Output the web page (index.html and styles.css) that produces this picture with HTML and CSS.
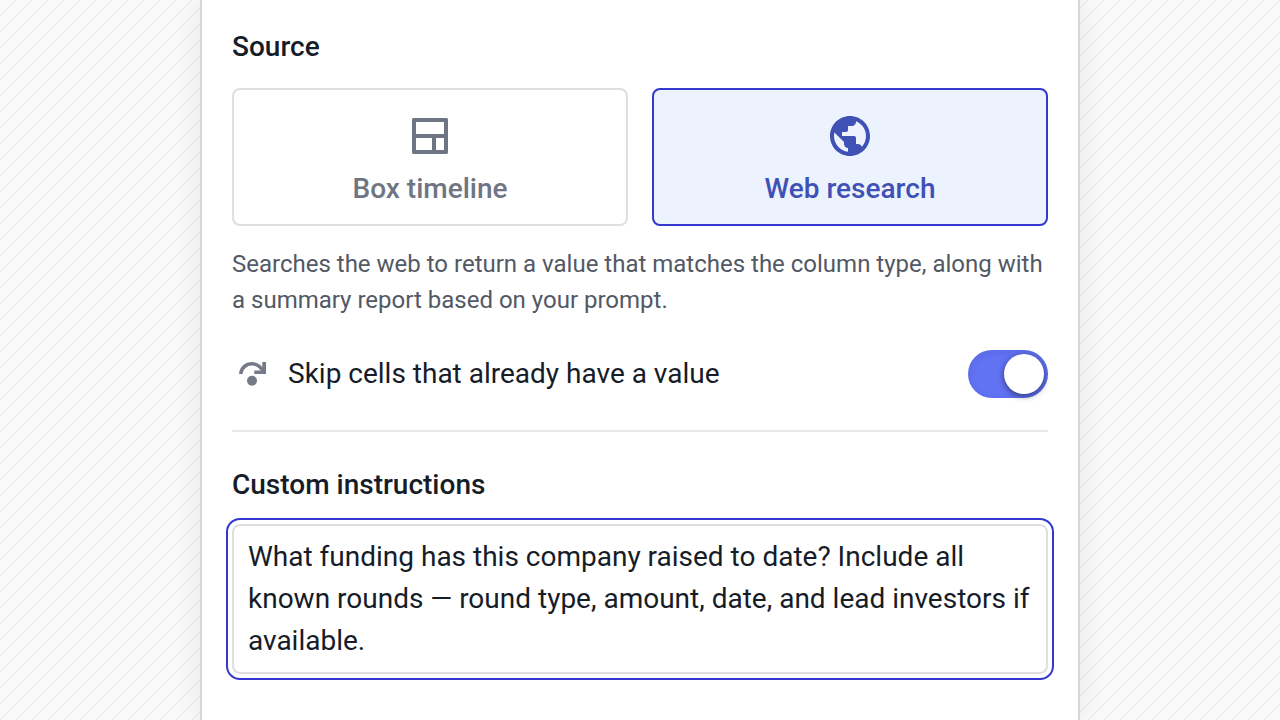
FILE: index.html
```html
<!DOCTYPE html>
<html lang="en">
  <head>
    <meta charset="UTF-8" />
    <meta name="viewport" content="width=device-width, initial-scale=1.0" />
    <title>Column settings</title>
    <link rel="stylesheet" href="styles.css">
  </head>
  <body>
    <form class="panel">
      <!-- Source -->
      <fieldset class="source">
        <legend class="section-title">Source</legend>
        <div class="source-options">
          <label class="source-card">
            <input type="radio" name="source" value="box" />
            <svg class="source-icon" viewBox="0 0 24 24" aria-hidden="true">
              <path fill-rule="evenodd" d="M3.5 3h17l.5.5v17l-.5.5h-17l-.5-.5v-17zM5 5v6h14V5zM5 13v6h8v-6zM15 13v6h4v-6z" />
            </svg>
            <span>Box timeline</span>
          </label>
          <label class="source-card">
            <input type="radio" name="source" value="web" checked />
            <svg class="source-icon" viewBox="0 0 24 24" aria-hidden="true">
              <path d="M12 2C6.48 2 2 6.48 2 12s4.48 10 10 10 10-4.48 10-10S17.52 2 12 2zm-1 17.93c-3.95-.49-7-3.85-7-7.93 0-.62.08-1.21.21-1.79L9 15v1c0 1.1.9 2 2 2v1.93zm6.9-2.54c-.26-.81-1-1.39-1.9-1.39h-1v-3c0-.55-.45-1-1-1H8v-2h2c.55 0 1-.45 1-1V7h2c1.1 0 2-.9 2-2v-.41c2.93 1.19 5 4.06 5 7.41 0 2.08-.8 3.97-2.1 5.39z" />
            </svg>
            <span>Web research</span>
          </label>
        </div>
      </fieldset>
      <p class="help-text">Searches the web to return a value that matches the column type, along with a summary report based on your prompt.</p>

      <!-- Skip toggle -->
      <div class="toggle-row">
        <svg class="skip-icon" viewBox="0 0 40 40" aria-hidden="true">
          <circle cx="20" cy="26.7" r="5" />
          <path d="M30.3 8H34v12H22.3v-3.6h8z" />
          <path class="skip-arc" d="M8.7 20C9.3 14 14 9.8 20 9.8c4.8 0 8.8 2.7 11.5 8" />
        </svg>
        <label class="toggle-label" for="skip-cells">Skip cells that already have a value</label>
        <input type="checkbox" role="switch" id="skip-cells" class="toggle" checked />
      </div>

      <!-- Custom instructions -->
      <div class="instructions">
        <label class="section-title" for="instructions">Custom instructions</label>
        <textarea id="instructions" rows="3">What funding has this company raised to date? Include all known rounds — round type, amount, date, and lead investors if available.</textarea>
      </div>
    </form>
  </body>
</html>
```

FILE: styles.css
```css
* {
  box-sizing: border-box;
}

body {
  margin: 0;
  font-family: Roboto, sans-serif;
  font-size: 28px;
  line-height: 42px;
  color: #161c28;
  background-color: #fafafa;
  background-image: linear-gradient(135deg, transparent 44%, #eee 49%, #eee 51%, transparent 56%);
  background-size: 16px 16px;
}

.panel {
  max-width: 880px;
  min-height: 100vh;
  margin: 0 auto;
  padding: 26px 30px 40px;
  background-color: #fff;
  border: solid #d5d5db;
  border-width: 0 2px;
  box-shadow: 0 0 32px rgba(0, 0, 0, 0.08);
}

.section-title {
  display: block;
  padding: 0;
  font-weight: 500;
}

/* Source */
.source {
  min-width: 0;
  margin: 0;
  padding: 0;
  border: none;
}

.source-options {
  display: grid;
  grid-template-columns: 1fr 1fr;
  gap: 24px;
  margin-top: 20px;
}

.source-card {
  position: relative;
  display: flex;
  flex-direction: column;
  align-items: center;
  gap: 8px;
  padding: 22px 14px 14px;
  font-weight: 500;
  color: #707583;
  border: 2px solid #dfdfdf;
  border-radius: 8px;
  cursor: pointer;
}

.source-card input {
  position: absolute;
  inset: 0;
  margin: 0;
  opacity: 0;
}

.source-card:has(input:checked) {
  color: #3f51b5;
  background-color: #ecf3ff;
  border-color: #3538cd;
}

.source-icon {
  width: 48px;
  height: 48px;
  fill: currentColor;
}

.help-text {
  margin: 20px 0 32px;
  font-size: 24px;
  line-height: 36px;
  color: #535865;
}

/* Skip toggle */
.toggle-row {
  display: flex;
  align-items: center;
  gap: 16px;
  padding-bottom: 32px;
  border-bottom: 2px solid #e8e8e8;
}

.skip-icon {
  width: 40px;
  height: 40px;
  fill: #757a86;
}

.skip-arc {
  fill: none;
  stroke: #757a86;
  stroke-width: 3.6;
}

.toggle-label {
  flex: 1;
}

.toggle {
  appearance: none;
  width: 80px;
  height: 48px;
  margin: 0;
  padding: 4px;
  background-color: #6172f3;
  border-radius: 24px;
  box-shadow: inset 0 2px 8px rgba(0, 0, 0, 0.08);
  cursor: pointer;
}

.toggle::before {
  content: "";
  display: block;
  width: 40px;
  height: 40px;
  background-color: #fff;
  border-radius: 50%;
  box-shadow: 0 2px 6px rgba(0, 0, 0, 0.5);
}

.toggle:checked::before {
  margin-left: auto;
}

/* Custom instructions */
.instructions {
  margin-top: 32px;
}

textarea {
  display: block;
  width: 100%;
  margin-top: 18px;
  padding: 10px 14px;
  font: inherit;
  color: inherit;
  background-color: #fff;
  border: 2px solid #dfdfdf;
  border-radius: 8px;
  outline: 2px solid #3538cd;
  outline-offset: 4px;
  resize: none;
  overflow: hidden;
}
```
